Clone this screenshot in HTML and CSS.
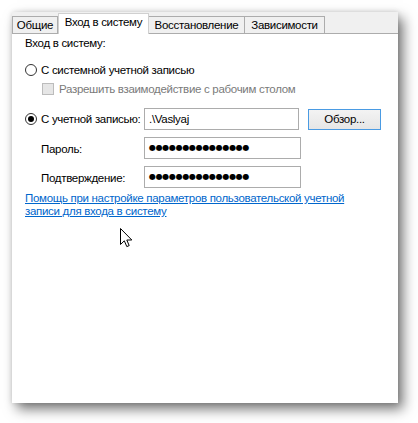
FILE: index.html
```html
<!DOCTYPE html>
<html lang="ru">

<head>
  <meta charset="UTF-8" />
  <meta name="viewport" content="width=device-width, initial-scale=1.0" />
  <title>Свойства службы</title>
  <link rel="stylesheet" href="styles.css">
</head>

<body>
  <div class="window">
    <div class="tabs">
      <span class="tab tab-general">Общие</span>
      <span class="tab tab-logon active">Вход в систему</span>
      <span class="tab tab-recovery">Восстановление</span>
      <span class="tab tab-deps">Зависимости</span>
    </div>

    <div class="page">
      <p class="caption">Вход в систему:</p>

      <label class="opt row-system">
        <span class="radio"></span>
        <span>С системной учетной записью</span>
      </label>
      <label class="opt row-desktop disabled">
        <span class="check"></span>
        <span>Разрешить взаимодействие с рабочим столом</span>
      </label>

      <div class="form">
        <label class="opt">
          <span class="radio checked"></span>
          <span>С учетной записью:</span>
        </label>
        <div class="field">.\Vaslyaj</div>
        <button class="btn" type="button">Обзор...</button>

        <span class="label">Пароль:</span>
        <div class="field dots">●●●●●●●●●●●●●●●</div>
        <span></span>

        <span class="label">Подтверждение:</span>
        <div class="field dots">●●●●●●●●●●●●●●●</div>
        <span></span>
      </div>

      <a class="help" href="#">Помощь при настройке параметров пользовательской учетной записи для входа в систему</a>
    </div>

    <!-- mouse pointer -->
    <svg class="pointer" width="13" height="20" viewBox="0 0 13 20">
      <path d="M0.5 0.5 L0.5 16.5 L4.3 12.8 L6.8 18.6 L9.2 17.6 L6.8 12 L11.8 12 Z" fill="#fff" stroke="#000"
        stroke-width="1" stroke-linejoin="miter" />
    </svg>
  </div>
</body>

</html>
```

FILE: styles.css
```css
:root {
  --line: #acacac;
  --strip: #f0f0f0;
  --text: #000000;
  --muted: #7a7a7a;
  --link: #0066cc;
}

html,
body {
  margin: 0;
  padding: 0;
  background-color: #ffffff;
}

body {
  font-family: "Liberation Sans", Arial, sans-serif;
  font-size: 11.5px;
  letter-spacing: -0.3px;
  color: var(--text);
  padding-bottom: 20px;
}

.window {
  position: relative;
  margin: 12px 0 0 12px;
  width: 386px;
  height: 391px;
  background-color: #ffffff;
  box-shadow: 5px 6px 12px rgba(0, 0, 0, 0.55), 0 0 5px rgba(0, 0, 0, 0.12);
}

/* tab strip */
.tabs {
  display: flex;
  align-items: flex-end;
  height: 21px;
  background-color: var(--strip);
  border-bottom: 1px solid var(--line);
}

.tab {
  box-sizing: border-box;
  height: 17px;
  line-height: 16px;
  text-align: center;
  white-space: nowrap;
  background-color: var(--strip);
  border: 1px solid var(--line);
  border-bottom: none;
}

.tab.active {
  height: 21px;
  line-height: 17px;
  margin-bottom: -1px;
  background-color: #ffffff;
  border-color: #d0d0d0;
}

.tab-general {
  width: 46px;
}

.tab-logon {
  width: 91px;
}

.tab-recovery {
  width: 96px;
  border-left: none;
}

.tab-deps {
  width: 80px;
  border-left: none;
}

/* page */
.page {
  padding: 1px 13px 0 13px;
}

.caption {
  margin: 0;
  line-height: 16px;
}

.opt {
  display: flex;
  align-items: center;
  gap: 4px;
  line-height: 16px;
  white-space: nowrap;
}

.row-system {
  margin-top: 11px;
}

.row-desktop {
  margin-top: 3px;
  margin-left: 17px;
  gap: 5px;
}

.disabled {
  color: var(--muted);
}

.radio {
  box-sizing: border-box;
  width: 12px;
  height: 12px;
  border: 1px solid #333333;
  border-radius: 50%;
  background-color: #ffffff;
  display: flex;
  align-items: center;
  justify-content: center;
}

.radio.checked::after {
  content: "";
  width: 6px;
  height: 6px;
  border-radius: 50%;
  background-color: #000000;
}

.check {
  box-sizing: border-box;
  width: 12px;
  height: 12px;
  border: 1px solid #bcbcbc;
  background-color: #e6e6e6;
}

.form {
  display: grid;
  grid-template-columns: 119px 155px auto;
  grid-auto-rows: 22px;
  row-gap: 7px;
  align-items: center;
  margin-top: 11px;
}

.label {
  padding-left: 16px;
  margin-top: 2px;
}

.field {
  box-sizing: border-box;
  height: 22px;
  border: 1px solid var(--line);
  padding: 0 4px;
  line-height: 20px;
  white-space: nowrap;
  overflow: hidden;
}

.form .field.dots {
  width: 157px;
  font-family: "DejaVu Sans", sans-serif;
  font-size: 8px;
  letter-spacing: -0.3px;
  padding-left: 4px;
}

.btn {
  box-sizing: border-box;
  justify-self: start;
  width: 73px;
  height: 21px;
  margin-left: 9px;
  padding: 0;
  font-family: inherit;
  font-size: 11.5px;
  letter-spacing: -0.3px;
  color: var(--text);
  border: 1px solid #4a9be3;
  background: linear-gradient(#f3f3f3, #e6e6e6);
}

.help {
  display: block;
  margin-top: 4px;
  width: 335px;
  line-height: 13px;
  color: var(--link);
  text-decoration: underline;
}

.pointer {
  position: absolute;
  left: 108px;
  top: 216px;
}
```
